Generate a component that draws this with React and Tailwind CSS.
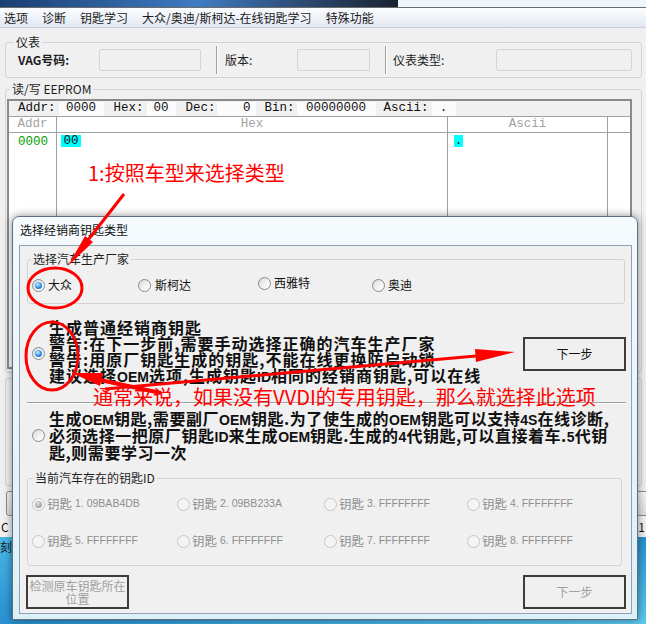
import React from 'react'

const ui = "font-['Noto_Sans_CJK_SC','Noto_Sans',sans-serif]"
const mono = "font-['Liberation_Mono','DejaVu_Sans_Mono',monospace]"

const Radio = ({ checked, disabled }) => (
  <span
    className={`flex h-[13px] w-[13px] shrink-0 items-center justify-center rounded-full border ${
      disabled ? 'border-[#c6c6c6] bg-[#f4f4f4]' : 'border-[#8a8a8a] bg-gradient-to-br from-[#d6d6d6] via-[#f1f1f1] to-white'
    }`}
  >
    {checked && (
      <span
        className={`h-[7px] w-[7px] rounded-full ${
          disabled
            ? 'bg-[radial-gradient(circle_at_40%_35%,#e4e4e4,#a0a0a0_70%)]'
            : 'bg-[radial-gradient(circle_at_40%_35%,#c6efff,#2d8fe0_55%,#0b4f9c)]'
        }`}
      />
    )}
  </span>
)

const Group = ({ title, className = '', legendClass = '', children }) => (
  <fieldset className={`rounded-[3px] border border-[#d3d3d3] ${className}`}>
    {title && (
      <legend className={`px-[2px] text-[12px] leading-[14px] text-[#1e1e1e] ${legendClass}`}>{title}</legend>
    )}
    {children}
  </fieldset>
)

// latin run inside the bold option text
const L = ({ children }) => (
  <span className="font-['Liberation_Sans',sans-serif] text-[14px] leading-none tracking-normal">{children}</span>
)

const ValueBox = ({ w, className = '', children }) => (
  <span className={`flex h-[14px] items-center justify-center bg-[#fbfbfb] ${w} ${className}`}>{children}</span>
)

const keys = [
  ['1. 09BAB4DB', true],
  ['2. 09BB233A'],
  ['3. FFFFFFFF'],
  ['4. FFFFFFFF'],
  ['5. FFFFFFFF'],
  ['6. FFFFFFFF'],
  ['7. FFFFFFFF'],
  ['8. FFFFFFFF'],
]

export default function App() {
  return (
    <div className={`relative flex h-[624px] w-[646px] flex-col overflow-hidden bg-[#f0f0f0] ${ui}`}>
      {/* window above, cut off */}
      <div className="flex h-[7px] shrink-0">
        <div className="w-[398px] bg-gradient-to-r from-[#1b3f73] via-[#3f7cc2] to-[#1a2232]" />
        <div className="flex-1 bg-[#eef6fb]" />
      </div>
      <div className="h-px shrink-0 bg-[#6b6b6b]" />

      {/* menu */}
      <div className="flex h-[20px] shrink-0 items-center gap-[14px] border-b border-[#c9cfda] bg-gradient-to-b from-[#fbfcfe] to-[#e3e8f3] pl-[4px] text-[12px] text-[#1a1a1a]">
        <span>选项</span>
        <span>诊断</span>
        <span>钥匙学习</span>
        <span>大众/奥迪/斯柯达-在线钥匙学习</span>
        <span>特殊功能</span>
      </div>

      {/* 仪表 */}
      <Group title="仪表" className="mt-[7px] ml-[5px] w-[637px] shrink-0 pb-[6px]" legendClass="ml-[8px]">
        <div className="flex h-[22px] items-center pl-[12px] text-[12px] text-[#1e1e1e]">
          <span className="w-[81px] font-semibold">VAG号码:</span>
          <span className="h-[22px] w-[102px] rounded-[2px] border border-[#d2d6db] bg-[#f0f0f0]" />
          <span className="-my-[3px] ml-[15px] h-[28px] w-[2px] border-l border-r border-l-[#a0a0a0] border-r-white" />
          <span className="ml-[7px] w-[72px]">版本:</span>
          <span className="h-[22px] w-[73px] rounded-[2px] border border-[#d2d6db] bg-[#f0f0f0]" />
          <span className="-my-[3px] ml-[15px] h-[28px] w-[2px] border-l border-r border-l-[#a0a0a0] border-r-white" />
          <span className="ml-[6px] w-[103px]">仪表类型:</span>
          <span className="h-[22px] w-[136px] rounded-[2px] border border-[#d2d6db] bg-[#f0f0f0]" />
        </div>
      </Group>

      {/* 读/写 EEPROM */}
      <Group title="读/写 EEPROM" className="mt-[4px] ml-[5px] w-[637px] shrink-0 pb-[3px]" legendClass="ml-[4px]">
        <div className={`mt-[3px] ml-[1px] flex h-[270px] w-[625px] flex-col border-2 border-[#8a8a8a] bg-white ${mono} text-[12.5px]`}>
          <div className="flex h-[16px] shrink-0 items-center border-b border-[#a0a0a0] bg-[#f0f0f0] pl-[9px] text-[#111]">
            <span>Addr:</span>
            <ValueBox w="w-[45px]" className="ml-[3px]">0000</ValueBox>
            <span className="ml-[10px]">Hex:</span>
            <ValueBox w="w-[29px]" className="ml-[3px]">00</ValueBox>
            <span className="ml-[10px]">Dec:</span>
            <ValueBox w="w-[39px]" className="ml-[1px] !justify-end pr-[5px]">0</ValueBox>
            <span className="ml-[9px]">Bin:</span>
            <ValueBox w="w-[79px]" className="ml-[2px]">00000000</ValueBox>
            <span className="ml-[8px]">Ascii:</span>
            <ValueBox w="w-[24px]" className="ml-[3px]">.</ValueBox>
          </div>
          <div className="flex h-[16px] shrink-0 border-b border-[#a0a0a0] text-[#a3a3a3]">
            <span className="flex w-[48px] items-center justify-center border-r border-[#a0a0a0]">Addr</span>
            <span className="flex w-[391px] items-center justify-center border-r border-[#a0a0a0]">Hex</span>
            <span className="flex w-[160px] items-center justify-center border-r border-[#a0a0a0]">Ascii</span>
            <span className="flex-1" />
          </div>
          <div className="flex flex-1">
            <div className="w-[48px] border-r border-[#a0a0a0] pt-[1px] pl-[9px] leading-[16px] text-[#00a000]">0000</div>
            <div className="w-[391px] border-r border-[#a0a0a0] pt-[2px] pl-[4px]">
              <span className="flex h-[12px] w-[20px] items-center justify-center bg-[#00ffff] text-[#111]">00</span>
            </div>
            <div className="w-[160px] border-r border-[#a0a0a0] pt-[2px] pl-[6px]">
              <span className="flex h-[12px] w-[9px] items-center justify-center bg-[#00ffff] text-[#111]">.</span>
            </div>
            <div className="flex-1" />
          </div>
        </div>
      </Group>

      <Group className="mt-[5px] ml-[5px] h-[108px] w-[637px] shrink-0" />

      <div className="mt-[5px] flex h-[25px] shrink-0 items-stretch">
        <span className="ml-[6px] w-[120px] rounded-[3px] border border-[#8c8c8c] bg-gradient-to-b from-[#f6f6f6] to-[#dcdcdc]" />
        <span className="ml-auto mr-[-30px] w-[50px] rounded-[3px] border border-[#8c8c8c] bg-gradient-to-b from-[#f6f6f6] to-[#dcdcdc]" />
      </div>
      <div className="flex h-[21px] shrink-0 items-center justify-between pl-[1px] pr-[1px] text-[12px] text-[#111]">
        <span>C</span>
        <span>1</span>
      </div>

      {/* desktop */}
      <div className="relative flex-1 bg-gradient-to-br from-[#47b8e6] via-[#2a8fd0] to-[#5ccbf0]">
        <span className="absolute top-[1px] left-0 text-[12px] text-[#1d1d1d]">刻</span>
      </div>

      {/* dialog */}
      <div className="absolute top-[216px] left-[12px] flex h-[404px] w-[626px] flex-col rounded-t-[7px] border border-[#5f6e81] bg-gradient-to-b from-[#f5fafd] via-[#e9f3fa] to-[#dcf0f8] shadow-[0_0_9px_rgba(0,0,0,0.45)]">
        <div className="flex h-[26px] shrink-0 items-center pl-[7px] text-[12px] text-[#111]">选择经销商钥匙类型</div>
        <div className="mt-[2px] ml-[6px] flex h-[369px] w-[613px] flex-col border border-[#8fa3b8] bg-[#f0f0f0]">
          <Group title="选择汽车生产厂家" className="mt-[6px] ml-[7px] w-[598px] pb-[10px]" legendClass="ml-[3px]">
            <div className="mt-[11px] flex h-[16px] items-center pl-[4px] text-[12px] text-[#111]">
              <span className="flex w-[106px] items-center gap-[3px]">
                <Radio checked />
                大众
              </span>
              <span className="flex w-[120px] items-center gap-[4px]">
                <Radio />
                斯柯达
              </span>
              <span className="flex w-[114px] -translate-y-[2px] items-center gap-[3px]">
                <Radio />
                西雅特
              </span>
              <span className="flex items-center gap-[3px]">
                <Radio />
                奥迪
              </span>
            </div>
          </Group>

          <div className="mt-[15px] flex items-start pl-[12px]">
            <span className="mt-[28px]">
              <Radio checked />
            </span>
            <div className="ml-[4px] text-[16px] leading-[16px] font-bold tracking-[1px] whitespace-nowrap text-[#111]">
              <div className="h-[16px]">生成普通经销商钥匙</div>
              <div className="h-[16px]">警告:在下一步前,需要手动选择正确的汽车生产厂家</div>
              <div className="h-[16px]">警告:用原厂钥匙生成的钥匙,不能在线更换防启动锁</div>
              <div className="h-[16px]">
                建议选择<L>OEM</L>选项,生成钥匙<L>ID</L>相同的经销商钥匙,可以在线
              </div>
            </div>
            <button
              type="button"
              className="mt-[18px] mr-[5px] ml-auto h-[34px] w-[103px] border-2 border-[#3c3c3c] bg-[#f0f0f0] text-[12px] text-[#111]"
            >
              下一步
            </button>
          </div>

          <div className="mt-[19px] ml-[7px] h-[2px] w-[599px] border-t border-b border-t-[#a0a0a0] border-b-white" />

          <div className="mt-[6px] flex items-start pl-[12px]">
            <span className="mt-[19px]">
              <Radio />
            </span>
            <div className="ml-[4px] text-[16px] leading-[17px] font-bold tracking-[0.55px] whitespace-nowrap text-[#111]">
              <div className="h-[17px]">
                生成<L>OEM</L>钥匙,需要副厂<L>OEM</L>钥匙.为了使生成的<L>OEM</L>钥匙可以支持<L>4S</L>在线诊断,
              </div>
              <div className="h-[17px]">
                必须选择一把原厂钥匙<L>ID</L>来生成<L>OEM</L>钥匙.生成的<L>4</L>代钥匙,可以直接着车.<L>5</L>代钥
              </div>
              <div className="h-[17px]">匙,则需要学习一次</div>
            </div>
          </div>

          <Group title="当前汽车存在的钥匙ID" className="mt-[10px] ml-[7px] w-[595px] pb-[16px]" legendClass="ml-[5px]">
            <div className="mt-[11px] grid grid-cols-[145px_147px_143px_1fr] gap-y-[21px] pl-[4px] text-[12.5px] text-[#8e8e8e]">
              {keys.map(([k, on]) => (
                <span key={k} className="flex h-[16px] items-center">
                  <Radio checked={on} disabled />
                  <span className="ml-[2px]">钥匙</span>
                  <span className="ml-[3px] font-['Liberation_Sans',sans-serif] text-[10.5px]">{k}</span>
                </span>
              ))}
            </div>
          </Group>

          <div className="mt-[9px] flex items-start">
            <button
              type="button"
              className="ml-[6px] flex h-[34px] w-[103px] flex-col items-center justify-center border-2 border-[#3c3c3c] bg-[#f0f0f0] text-[12px] leading-[13px] text-[#a0a0a0]"
            >
              <span>检测原车钥匙所在</span>
              <span>位置</span>
            </button>
            <button
              type="button"
              className="mr-[5px] ml-auto h-[34px] w-[103px] border-2 border-[#3c3c3c] bg-[#f0f0f0] text-[12px] text-[#a0a0a0]"
            >
              下一步
            </button>
          </div>
        </div>
      </div>

      {/* red annotations */}
      <div className="pointer-events-none absolute inset-0">
        <div className="absolute top-[161px] left-[88px] text-[20px] leading-[24px] whitespace-nowrap text-[#ff0000]">
          1:按照车型来选择类型
        </div>
        <div className="absolute top-[385px] left-[93px] text-[20px] leading-[24px] whitespace-nowrap text-[#ff0000]">
          通常来说，如果没有VVDI的专用钥匙，那么就选择此选项
        </div>
        <svg width="646" height="624" className="absolute inset-0" fill="none">
          <ellipse cx="55" cy="288" rx="27" ry="20" stroke="#ff0000" strokeWidth="3" />
          <ellipse cx="52" cy="356" rx="26" ry="34" stroke="#ff0000" strokeWidth="3" />
          <line x1="124" y1="194" x2="88" y2="240" stroke="#ff0000" strokeWidth="3" />
          <polygon points="68,266 93,242 85,236" fill="#ff0000" />
          <line x1="161" y1="393" x2="100" y2="380" stroke="#ff0000" strokeWidth="4" />
          <polygon points="72,373 103,373 100,386" fill="#ff0000" />
          <line x1="105" y1="389" x2="476" y2="356" stroke="#ff0000" strokeWidth="3" />
          <polygon points="515,352 475,349 476,362" fill="#ff0000" />
        </svg>
      </div>
    </div>
  )
}
